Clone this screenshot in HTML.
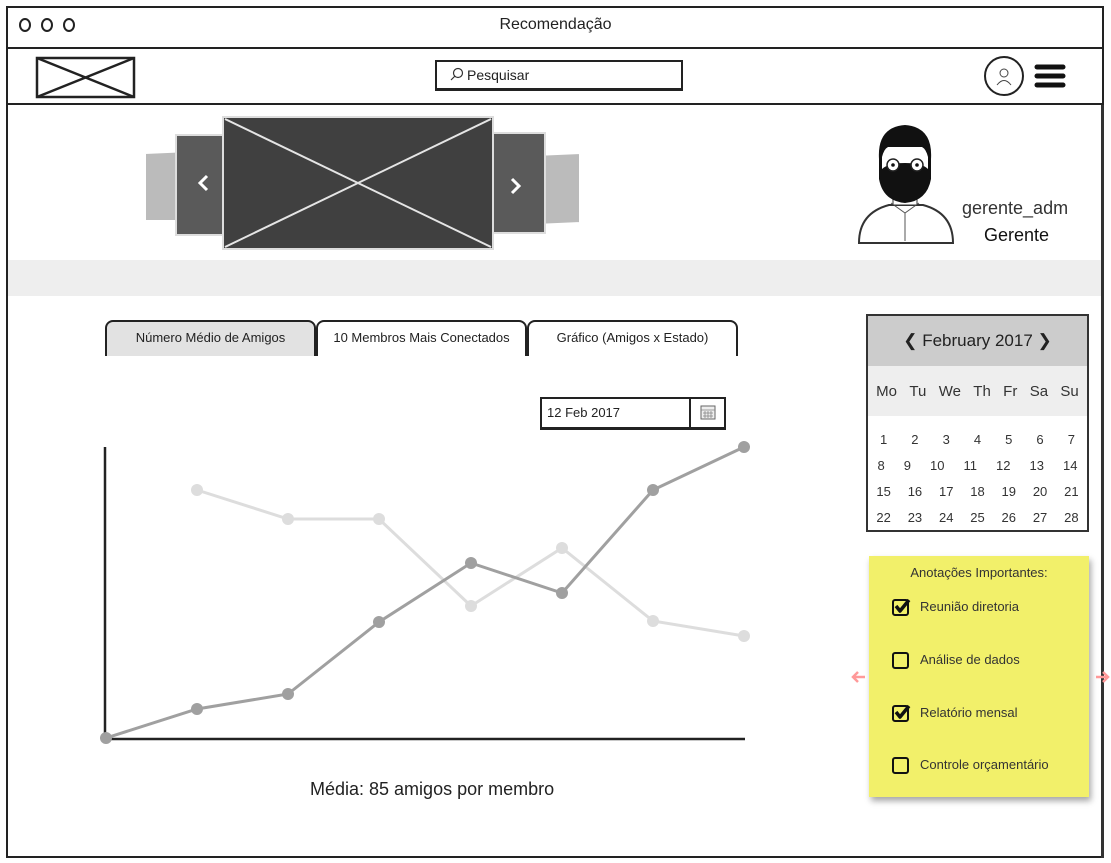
<!DOCTYPE html>
<html><head><meta charset="utf-8"><style>
*{box-sizing:border-box;margin:0;padding:0}
body{width:1111px;height:863px;background:#fff;position:relative;overflow:hidden;font-family:"Liberation Sans",sans-serif;color:#222}
.a{position:absolute}
</style></head><body>
<div class="a" style="left:6px;top:6px;width:1098px;height:852px;border:2px solid #222"></div>
<div class="a" style="left:6px;top:47px;width:1098px;height:2px;background:#222"></div>
<div class="a" style="left:6px;top:103px;width:1098px;height:2px;background:#222"></div>
<div class="a" style="left:1101px;top:105px;width:3px;height:753px;background:#333"></div>
<svg class="a" style="left:16px;top:16px" width="70" height="20"><g fill="none" stroke="#222" stroke-width="2"><ellipse cx="9" cy="9" rx="5" ry="6"/><ellipse cx="31" cy="9" rx="5" ry="6"/><ellipse cx="53" cy="9" rx="5" ry="6"/></g></svg>
<div class="a" style="left:0;width:1111px;top:16px;text-align:center;font-size:16px">Recomendação</div>
<svg class="a" style="left:35px;top:56px" width="102" height="44"><g fill="none" stroke="#222" stroke-width="2.5"><rect x="2" y="2" width="97" height="39"/><line x1="2" y1="2" x2="99" y2="41"/><line x1="99" y1="2" x2="2" y2="41"/></g></svg>
<div class="a" style="left:435px;top:60px;width:248px;height:31px;border:2px solid #222;border-bottom-width:3px"></div>
<svg class="a" style="left:450px;top:67px" width="14" height="14"><circle cx="8" cy="6" r="4.5" fill="none" stroke="#333" stroke-width="1.2"/><line x1="5" y1="9" x2="1" y2="13" stroke="#333" stroke-width="1.2"/></svg>
<div class="a" style="left:467px;top:67px;font-size:14px">Pesquisar</div>
<svg class="a" style="left:983px;top:55px" width="90" height="45"><ellipse cx="21" cy="21" rx="19" ry="19" fill="none" stroke="#222" stroke-width="2"/><circle cx="21" cy="18" r="4" fill="none" stroke="#444"/><path d="M14 30 q7-9 14 0" fill="none" stroke="#444"/><g stroke="#111" stroke-width="5" stroke-linecap="round"><line x1="54" y1="12" x2="80" y2="12"/><line x1="54" y1="21" x2="80" y2="21"/><line x1="54" y1="30" x2="80" y2="30"/></g></svg>
<svg class="a" style="left:140px;top:113px" width="445" height="140">
<polygon points="5,40 50,38 50,108 5,108" fill="#bbb" stroke="#fff" stroke-width="2"/>
<polygon points="395,42 440,40 440,110 395,112" fill="#bbb" stroke="#fff" stroke-width="2"/>
<polygon points="36,22 85,22 85,122 36,122" fill="#5a5a5a" stroke="#ddd" stroke-width="2"/>
<polygon points="350,20 405,20 405,120 350,120" fill="#5a5a5a" stroke="#ddd" stroke-width="2"/>
<rect x="83" y="4" width="270" height="132" fill="#404040" stroke="#ddd" stroke-width="2"/>
<g stroke="#e5e5e5" stroke-width="2"><line x1="85" y1="6" x2="351" y2="134"/><line x1="351" y1="6" x2="85" y2="134"/></g>
<g fill="none" stroke="#fff" stroke-width="3"><polyline points="67,63 60,70 67,77"/><polyline points="372,66 379,73 372,80"/></g>
</svg>
<svg class="a" style="left:855px;top:123px" width="100" height="124">
<path d="M4 120 q0-30 30-38 l34 0 q30 8 30 38 z" fill="#fff" stroke="#333" stroke-width="2"/>
<path d="M36 80 l14 10 14-10" fill="none" stroke="#555"/><line x1="50" y1="90" x2="50" y2="118" stroke="#555"/>
<rect x="38" y="60" width="24" height="22" fill="#fff" stroke="#333"/>
<path d="M24 36 q-2-32 26-34 q28 2 26 34 l0 20 q-4 22 -26 24 q-22-2 -26-24z" fill="#111"/>
<path d="M27 34 q2-8 6-10 l34 0 q4 2 6 10 l0 12 q-6-6 -23-6 q-17 0 -23 6z" fill="#fff"/>
<circle cx="38" cy="42" r="6" fill="#fff" stroke="#222" stroke-width="1.5"/><circle cx="62" cy="42" r="6" fill="#fff" stroke="#222" stroke-width="1.5"/>
<circle cx="38" cy="42" r="1.8" fill="#111"/><circle cx="62" cy="42" r="1.8" fill="#111"/>
</svg>
<div class="a" style="left:962px;top:198px;font-size:18px;color:#333">gerente_adm</div>
<div class="a" style="left:984px;top:225px;font-size:18px;color:#111">Gerente</div>
<div class="a" style="left:8px;top:260px;width:1093px;height:36px;background:#eee"></div>
<div class="a" style="left:105px;top:320px;width:211px;height:36px;background:#e2e2e2;border:2px solid #222;border-bottom:none;border-radius:8px 8px 0 0;font-size:13px;text-align:center;line-height:32px">Número Médio de Amigos</div>
<div class="a" style="left:316px;top:320px;width:211px;height:36px;background:#fff;border:2px solid #222;border-bottom:none;border-radius:8px 8px 0 0;font-size:13px;text-align:center;line-height:32px;white-space:nowrap">10 Membros Mais Conectados</div>
<div class="a" style="left:527px;top:320px;width:211px;height:36px;background:#fff;border:2px solid #222;border-bottom:none;border-radius:8px 8px 0 0;font-size:13px;text-align:center;line-height:32px">Gráfico (Amigos x Estado)</div>
<div class="a" style="left:540px;top:397px;width:186px;height:33px;border:2px solid #222;border-bottom-width:3px"></div>
<div class="a" style="left:689px;top:397px;width:2px;height:33px;background:#222"></div>
<div class="a" style="left:547px;top:405px;font-size:13px">12 Feb 2017</div>
<svg class="a" style="left:700px;top:404px" width="16" height="16"><rect x="1" y="2" width="14" height="13" fill="#eee" stroke="#666"/><g stroke="#888" stroke-width=".8"><line x1="1" y1="6" x2="15" y2="6"/><line x1="3" y1="9" x2="13" y2="9"/><line x1="3" y1="12" x2="13" y2="12"/><line x1="5" y1="7" x2="5" y2="14"/><line x1="8" y1="7" x2="8" y2="14"/><line x1="11" y1="7" x2="11" y2="14"/></g></svg>
<svg class="a" style="left:95px;top:435px" width="665" height="315">
<g stroke="#222" stroke-width="2.5"><line x1="10" y1="12" x2="10" y2="304"/><line x1="10" y1="304" x2="650" y2="304"/></g>
<polyline points="102,55 193,84 284,84 376,171 467,113 558,186 649,201" fill="none" stroke="#ddd" stroke-width="3"/>
<g fill="#ddd"><circle cx="102" cy="55" r="6"/><circle cx="193" cy="84" r="6"/><circle cx="284" cy="84" r="6"/><circle cx="376" cy="171" r="6"/><circle cx="467" cy="113" r="6"/><circle cx="558" cy="186" r="6"/><circle cx="649" cy="201" r="6"/></g>
<polyline points="11,303 102,274 193,259 284,187 376,128 467,158 558,55 649,12" fill="none" stroke="#a0a0a0" stroke-width="3"/>
<g fill="#a0a0a0"><circle cx="11" cy="303" r="6"/><circle cx="102" cy="274" r="6"/><circle cx="193" cy="259" r="6"/><circle cx="284" cy="187" r="6"/><circle cx="376" cy="128" r="6"/><circle cx="467" cy="158" r="6"/><circle cx="558" cy="55" r="6"/><circle cx="649" cy="12" r="6"/></g>
</svg>
<div class="a" style="left:310px;top:779px;font-size:18px">Média: 85 amigos por membro</div>
<div class="a" style="left:866px;top:314px;width:223px;height:218px;border:2px solid #333;overflow:hidden;background:#fff">
<div style="height:50px;background:#ccc;text-align:center;line-height:50px;font-size:17px">❮ February 2017 ❯</div>
<div style="height:50px;background:#eee;display:flex;justify-content:space-around;align-items:center;font-size:15px;color:#333;padding:0 2px"><span>Mo</span><span>Tu</span><span>We</span><span>Th</span><span>Fr</span><span>Sa</span><span>Su</span></div>
<div style="font-size:13px;color:#333;padding-top:16px">
<div style="display:flex;justify-content:space-around;height:26px"><span>1</span><span>2</span><span>3</span><span>4</span><span>5</span><span>6</span><span>7</span></div>
<div style="display:flex;justify-content:space-around;height:26px"><span>8</span><span>9</span><span>10</span><span>11</span><span>12</span><span>13</span><span>14</span></div>
<div style="display:flex;justify-content:space-around;height:26px"><span>15</span><span>16</span><span>17</span><span>18</span><span>19</span><span>20</span><span>21</span></div>
<div style="display:flex;justify-content:space-around;height:26px"><span>22</span><span>23</span><span>24</span><span>25</span><span>26</span><span>27</span><span>28</span></div>
</div></div>
<div class="a" style="left:869px;top:556px;width:220px;height:241px;background:#f2f06a;box-shadow:2px 4px 6px rgba(0,0,0,.35)"></div>
<div class="a" style="left:869px;top:565px;width:220px;text-align:center;font-size:13px;color:#333">Anotações Importantes:</div>
<svg class="a" style="left:890px;top:596px" width="30" height="185"><g fill="none" stroke="#111" stroke-width="2"><rect x="3" y="4" width="15" height="15" rx="2"/><rect x="3" y="57" width="15" height="15" rx="2"/><rect x="3" y="110" width="15" height="15" rx="2"/><rect x="3" y="162" width="15" height="15" rx="2"/></g><g fill="none" stroke="#111" stroke-width="3.5" stroke-linejoin="round"><polyline points="6,10 10,15 19,4"/><polyline points="6,116 10,121 19,110"/></g></svg>
<div class="a" style="left:920px;top:599px;font-size:13px;color:#333">Reunião diretoria</div>
<div class="a" style="left:920px;top:652px;font-size:13px;color:#333">Análise de dados</div>
<div class="a" style="left:920px;top:705px;font-size:13px;color:#333">Relatório mensal</div>
<div class="a" style="left:920px;top:757px;font-size:13px;color:#333">Controle orçamentário</div>
<svg class="a" style="left:851px;top:670px" width="16" height="14"><g fill="none" stroke="#f99" stroke-width="2.5"><line x1="2" y1="7" x2="14" y2="7"/><polyline points="7,2 2,7 7,12"/></g></svg>
<svg class="a" style="left:1095px;top:670px" width="16" height="14"><g fill="none" stroke="#f99" stroke-width="2.5"><line x1="1" y1="7" x2="13" y2="7"/><polyline points="8,2 13,7 8,12"/></g></svg>
</body></html>
